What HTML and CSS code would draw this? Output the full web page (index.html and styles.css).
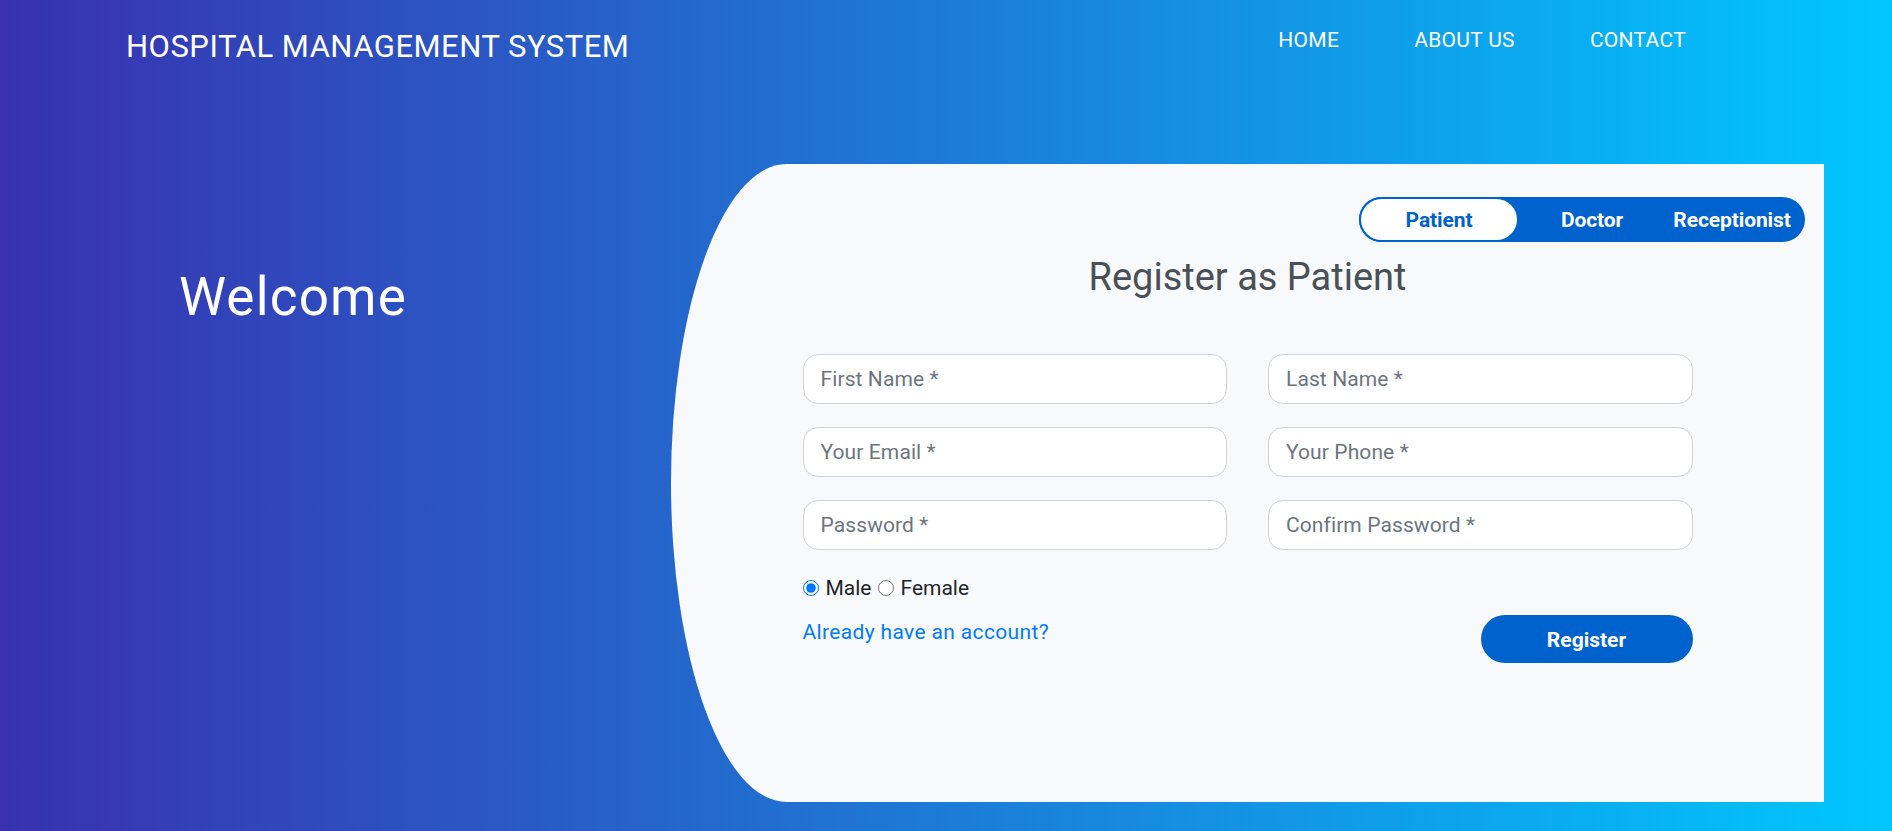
FILE: index.html
```html
<!DOCTYPE html>
<html lang="en">
<head>
<meta charset="utf-8">
<title>Hospital Management System</title>
<link rel="stylesheet" href="styles.css">
</head>
<body>
<header class="topbar">
  <div class="brand">HOSPITAL MANAGEMENT SYSTEM</div>
  <nav class="nav">
    <a class="nav-link" href="#">HOME</a>
    <a class="nav-link" href="#">ABOUT US</a>
    <a class="nav-link" href="#">CONTACT</a>
  </nav>
</header>
<main class="main">
  <section class="left">
    <h1 class="welcome">Welcome</h1>
  </section>
  <section class="card">
    <div class="tabs-row">
      <div class="tabs">
        <a class="tab tab-active" href="#">Patient</a>
        <a class="tab tab-doctor" href="#">Doctor</a>
        <a class="tab tab-recep" href="#">Receptionist</a>
      </div>
    </div>
    <h3 class="heading">Register as Patient</h3>
    <form class="form">
      <div class="grid">
        <input class="field" type="text" placeholder="First Name *">
        <input class="field" type="text" placeholder="Last Name *">
        <input class="field" type="email" placeholder="Your Email *">
        <input class="field" type="text" placeholder="Your Phone *">
        <input class="field" type="password" placeholder="Password *">
        <input class="field" type="password" placeholder="Confirm Password *">
      </div>
      <div class="gender">
        <label class="radio-label"><input class="radio" type="radio" name="gender" checked>Male</label>
        <label class="radio-label"><input class="radio" type="radio" name="gender">Female</label>
      </div>
      <div class="bottom-row">
        <a class="login-link" href="#">Already have an account?</a>
        <button class="btn-register" type="button">Register</button>
      </div>
    </form>
  </section>
</main>
</body>
</html>
```
FILE: styles.css
```css
* { box-sizing: border-box; }
html, body { margin: 0; padding: 0; }
body {
  width: 1892px;
  height: 831px;
  overflow: hidden;
  font-family: Roboto, "Liberation Sans", sans-serif;
  background: linear-gradient(to right, #3931af, #00c6ff);
  color: #fff;
}
.topbar {
  height: 80px;
  display: flex;
  justify-content: space-between;
  align-items: flex-start;
}
.brand {
  margin-left: 126px;
  padding-top: 28px;
  font-size: 31px;
  letter-spacing: 0.5px;
  line-height: normal;
  color: #fff;
}
.nav {
  display: flex;
  gap: 75px;
  margin-right: 206px;
  padding-top: 28px;
}
.nav-link {
  color: #fff;
  text-decoration: none;
  font-size: 21px;
  letter-spacing: 0.3px;
  line-height: normal;
}
.main {
  display: flex;
  align-items: flex-start;
}
.left {
  width: 586px;
  text-align: center;
  padding-top: 186px;
}
.welcome {
  margin: 0;
  font-size: 53px;
  letter-spacing: 1.2px;
  font-weight: 400;
  line-height: normal;
  color: #fff;
}
.card {
  margin-left: 85px;
  margin-top: 84px;
  width: 1153px;
  height: 638px;
  background: #f8f9fa;
  border-top-left-radius: 10% 50%;
  border-bottom-left-radius: 10% 50%;
  padding-top: 33px;
}
.tabs-row {
  display: flex;
  justify-content: flex-end;
  padding-right: 19px;
}
.tabs {
  display: flex;
  height: 45px;
  width: 446px;
  background: #0062cc;
  border-radius: 24px;
}
.tab {
  display: flex;
  align-items: center;
  justify-content: center;
  font-size: 21px;
  font-weight: 700;
  color: #fff;
  text-decoration: none;
  letter-spacing: -0.1px;
}
.tab-active {
  width: 160px;
  background: #fff;
  color: #0062cc;
  border: 2px solid #0062cc;
  border-radius: 24px;
}
.tab-doctor { width: 146px; }
.tab-recep { flex: 1; padding-right: 6px; }
.heading {
  margin: 13px 0 55px;
  text-align: center;
  font-size: 38px;
  font-weight: 400;
  line-height: normal;
  color: #495057;
}
.form {
  width: 890px;
  margin: 0 auto;
}
.grid {
  display: grid;
  grid-template-columns: 1fr 1fr;
  column-gap: 41px;
  row-gap: 23px;
}
.field {
  height: 50px;
  width: 100%;
  border: 1px solid #ced4da;
  border-radius: 15px;
  background: #fff;
  padding: 0 17px;
  font-family: Roboto, "Liberation Sans", sans-serif;
  font-size: 21px;
  letter-spacing: 0.1px;
  color: #495057;
  outline: none;
}
.field::placeholder { color: #6c757d; opacity: 1; }
.gender {
  margin-top: 26px;
  display: flex;
  align-items: center;
  font-size: 21px;
  line-height: normal;
  color: #212529;
}
.radio-label {
  display: flex;
  align-items: center;
  margin-right: 6px;
}
.radio {
  width: 16px;
  height: 16px;
  margin: 0 7px 0 0;
  accent-color: #0075ff;
}
.bottom-row {
  margin-top: 15px;
  display: flex;
  justify-content: space-between;
  align-items: flex-start;
}
.login-link {
  padding-top: 5px;
  font-size: 21px;
  letter-spacing: 0.35px;
  line-height: normal;
  color: #007bff;
  text-decoration: none;
}
.btn-register {
  width: 212px;
  height: 48px;
  border: none;
  border-radius: 24px;
  background: #0062cc;
  color: #fff;
  font-family: Roboto, "Liberation Sans", sans-serif;
  font-size: 21px;
  font-weight: 700;
  padding-top: 3px;
  cursor: pointer;
}
```
